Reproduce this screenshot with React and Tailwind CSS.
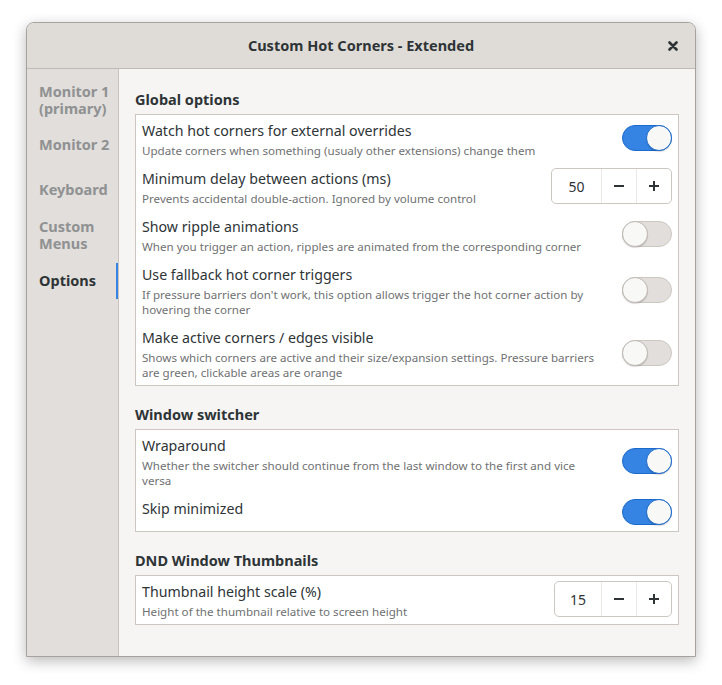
import React from "react";

const font = { fontFamily: '"Noto Sans", "Open Sans", sans-serif' };

function Switch({ on }) {
  if (on) {
    return (
      <div className="w-[50px] h-[26px] rounded-full bg-[#3584e4] border border-[#1b6acb] flex items-center justify-end shrink-0">
        <div className="w-[26px] h-[26px] -mr-px rounded-full bg-[#f8f8f7] border border-[#1b6acb] shadow-[0_1px_1px_rgba(0,0,0,0.15)]" />
      </div>
    );
  }
  return (
    <div className="w-[50px] h-[26px] rounded-full bg-[#e1dedb] border border-[#cdc7c2] flex items-center shrink-0">
      <div className="w-[26px] h-[26px] -ml-px rounded-full bg-[#f8f8f7] border border-[#bfb8b1] shadow-[0_1px_1px_rgba(0,0,0,0.15)]" />
    </div>
  );
}

function Spin({ value, numW }) {
  return (
    <div className="h-[36px] flex rounded-[5px] border border-[#cdc7c2] bg-white text-[#2e3436] shrink-0">
      <div className={`${numW} flex items-center justify-center text-[14px]`}>{value}</div>
      <div className="w-[35px] border-l border-[#ebe8e5] flex items-center justify-center">
        <svg width="12" height="12" viewBox="0 0 12 12">
          <path d="M1 6h10" stroke="#2e3436" strokeWidth="2" />
        </svg>
      </div>
      <div className="w-[35px] border-l border-[#ebe8e5] flex items-center justify-center">
        <svg width="12" height="12" viewBox="0 0 12 12">
          <path d="M1 6h10M6 1v10" stroke="#2e3436" strokeWidth="2" />
        </svg>
      </div>
    </div>
  );
}

function Row({ title, subtitle, control }) {
  return (
    <div className="flex items-center justify-between gap-4 px-[6px] pt-[3px] pb-[5px]">
      <div className="min-w-0">
        <div className="text-[14.2px] leading-[25px] text-[#2e3436]">{title}</div>
        {subtitle && (
          <div className="text-[11.6px] leading-[15px] text-[#6f7172]">{subtitle}</div>
        )}
      </div>
      {control}
    </div>
  );
}

function Section({ title, children, first }) {
  return (
    <section className={first ? "" : "mt-[18px]"}>
      <h2 className="text-[14.5px] leading-[20px] font-bold text-[#2e3436] mb-[5px]">{title}</h2>
      <div className="bg-white border border-[#cdc7c2]">{children}</div>
    </section>
  );
}

export default function App() {
  const sidebar = [
    { label: "Monitor 1\n(primary)" },
    { label: "Monitor 2" },
    { label: "Keyboard" },
    { label: "Custom\nMenus" },
    { label: "Options", active: true },
  ];

  return (
    <div className="min-h-screen bg-white pt-[22px] pl-[26px]" style={font}>
      <div className="w-[670px] h-[635px] flex flex-col border border-[#a7a29d] rounded-t-[8px] overflow-hidden bg-[#f6f5f4] shadow-[0_4px_14px_rgba(0,0,0,0.28)]">
        {/* Titlebar */}
        <header className="h-[46px] shrink-0 grid grid-cols-[1fr_auto_1fr] items-center bg-[#dfdcd8] border-b border-[#c0bab4]">
          <div />
          <span className="text-[14.5px] font-bold text-[#2e3436]">Custom Hot Corners - Extended</span>
          <div className="flex justify-end pr-[17px]">
            <svg width="10" height="10" viewBox="0 0 10 10">
              <path d="M1.5 1.5l7 7M8.5 1.5l-7 7" stroke="#2e3436" strokeWidth="2.6" strokeLinecap="round" />
            </svg>
          </div>
        </header>

        <div className="flex flex-1 min-h-0">
          {/* Sidebar */}
          <nav className="w-[92px] shrink-0 bg-[#e1dedb] border-r border-[#c9c4bf] pt-[8px]">
            {sidebar.map((item) => (
              <div key={item.label} className={`h-[45px] flex items-center ${item.active ? "mt-[1px]" : ""}`}>
                <div
                  className={`w-full min-h-[36px] flex items-center pl-[12px] whitespace-pre-line text-[14.5px] leading-[17px] font-bold ${
                    item.active
                      ? "text-[#2e3436] shadow-[inset_-2px_0_0_#3584e4]"
                      : "text-[#8f9192]"
                  }`}
                >
                  {item.label}
                </div>
              </div>
            ))}
          </nav>

          {/* Content */}
          <main className="flex-1 px-[16px] pt-[20px]">
            <Section title="Global options" first>
              <Row
                title="Watch hot corners for external overrides"
                subtitle="Update corners when something (usualy other extensions) change them"
                control={<Switch on />}
              />
              <Row
                title="Minimum delay between actions (ms)"
                subtitle="Prevents accidental double-action. Ignored by volume control"
                control={<Spin value="50" numW="w-[49px]" />}
              />
              <Row
                title="Show ripple animations"
                subtitle="When you trigger an action, ripples are animated from the corresponding corner"
                control={<Switch />}
              />
              <Row
                title="Use fallback hot corner triggers"
                subtitle="If pressure barriers don't work, this option allows trigger the hot corner action by hovering the corner"
                control={<Switch />}
              />
              <Row
                title="Make active corners / edges visible"
                subtitle="Shows which corners are active and their size/expansion settings. Pressure barriers are green, clickable areas are orange"
                control={<Switch />}
              />
            </Section>

            <Section title="Window switcher">
              <Row
                title="Wraparound"
                subtitle="Whether the switcher should continue from the last window to the first and vice versa"
                control={<Switch on />}
              />
              <div className="h-[38px] flex items-center justify-between px-[6px]">
                <div className="self-start pt-[3px] text-[14.2px] leading-[25px] text-[#2e3436]">Skip minimized</div>
                <Switch on />
              </div>
            </Section>

            <Section title="DND Window Thumbnails">
              <Row
                title="Thumbnail height scale (%)"
                subtitle="Height of the thumbnail relative to screen height"
                control={<Spin value="15" numW="w-[46px]" />}
              />
            </Section>
          </main>
        </div>
      </div>
    </div>
  );
}
